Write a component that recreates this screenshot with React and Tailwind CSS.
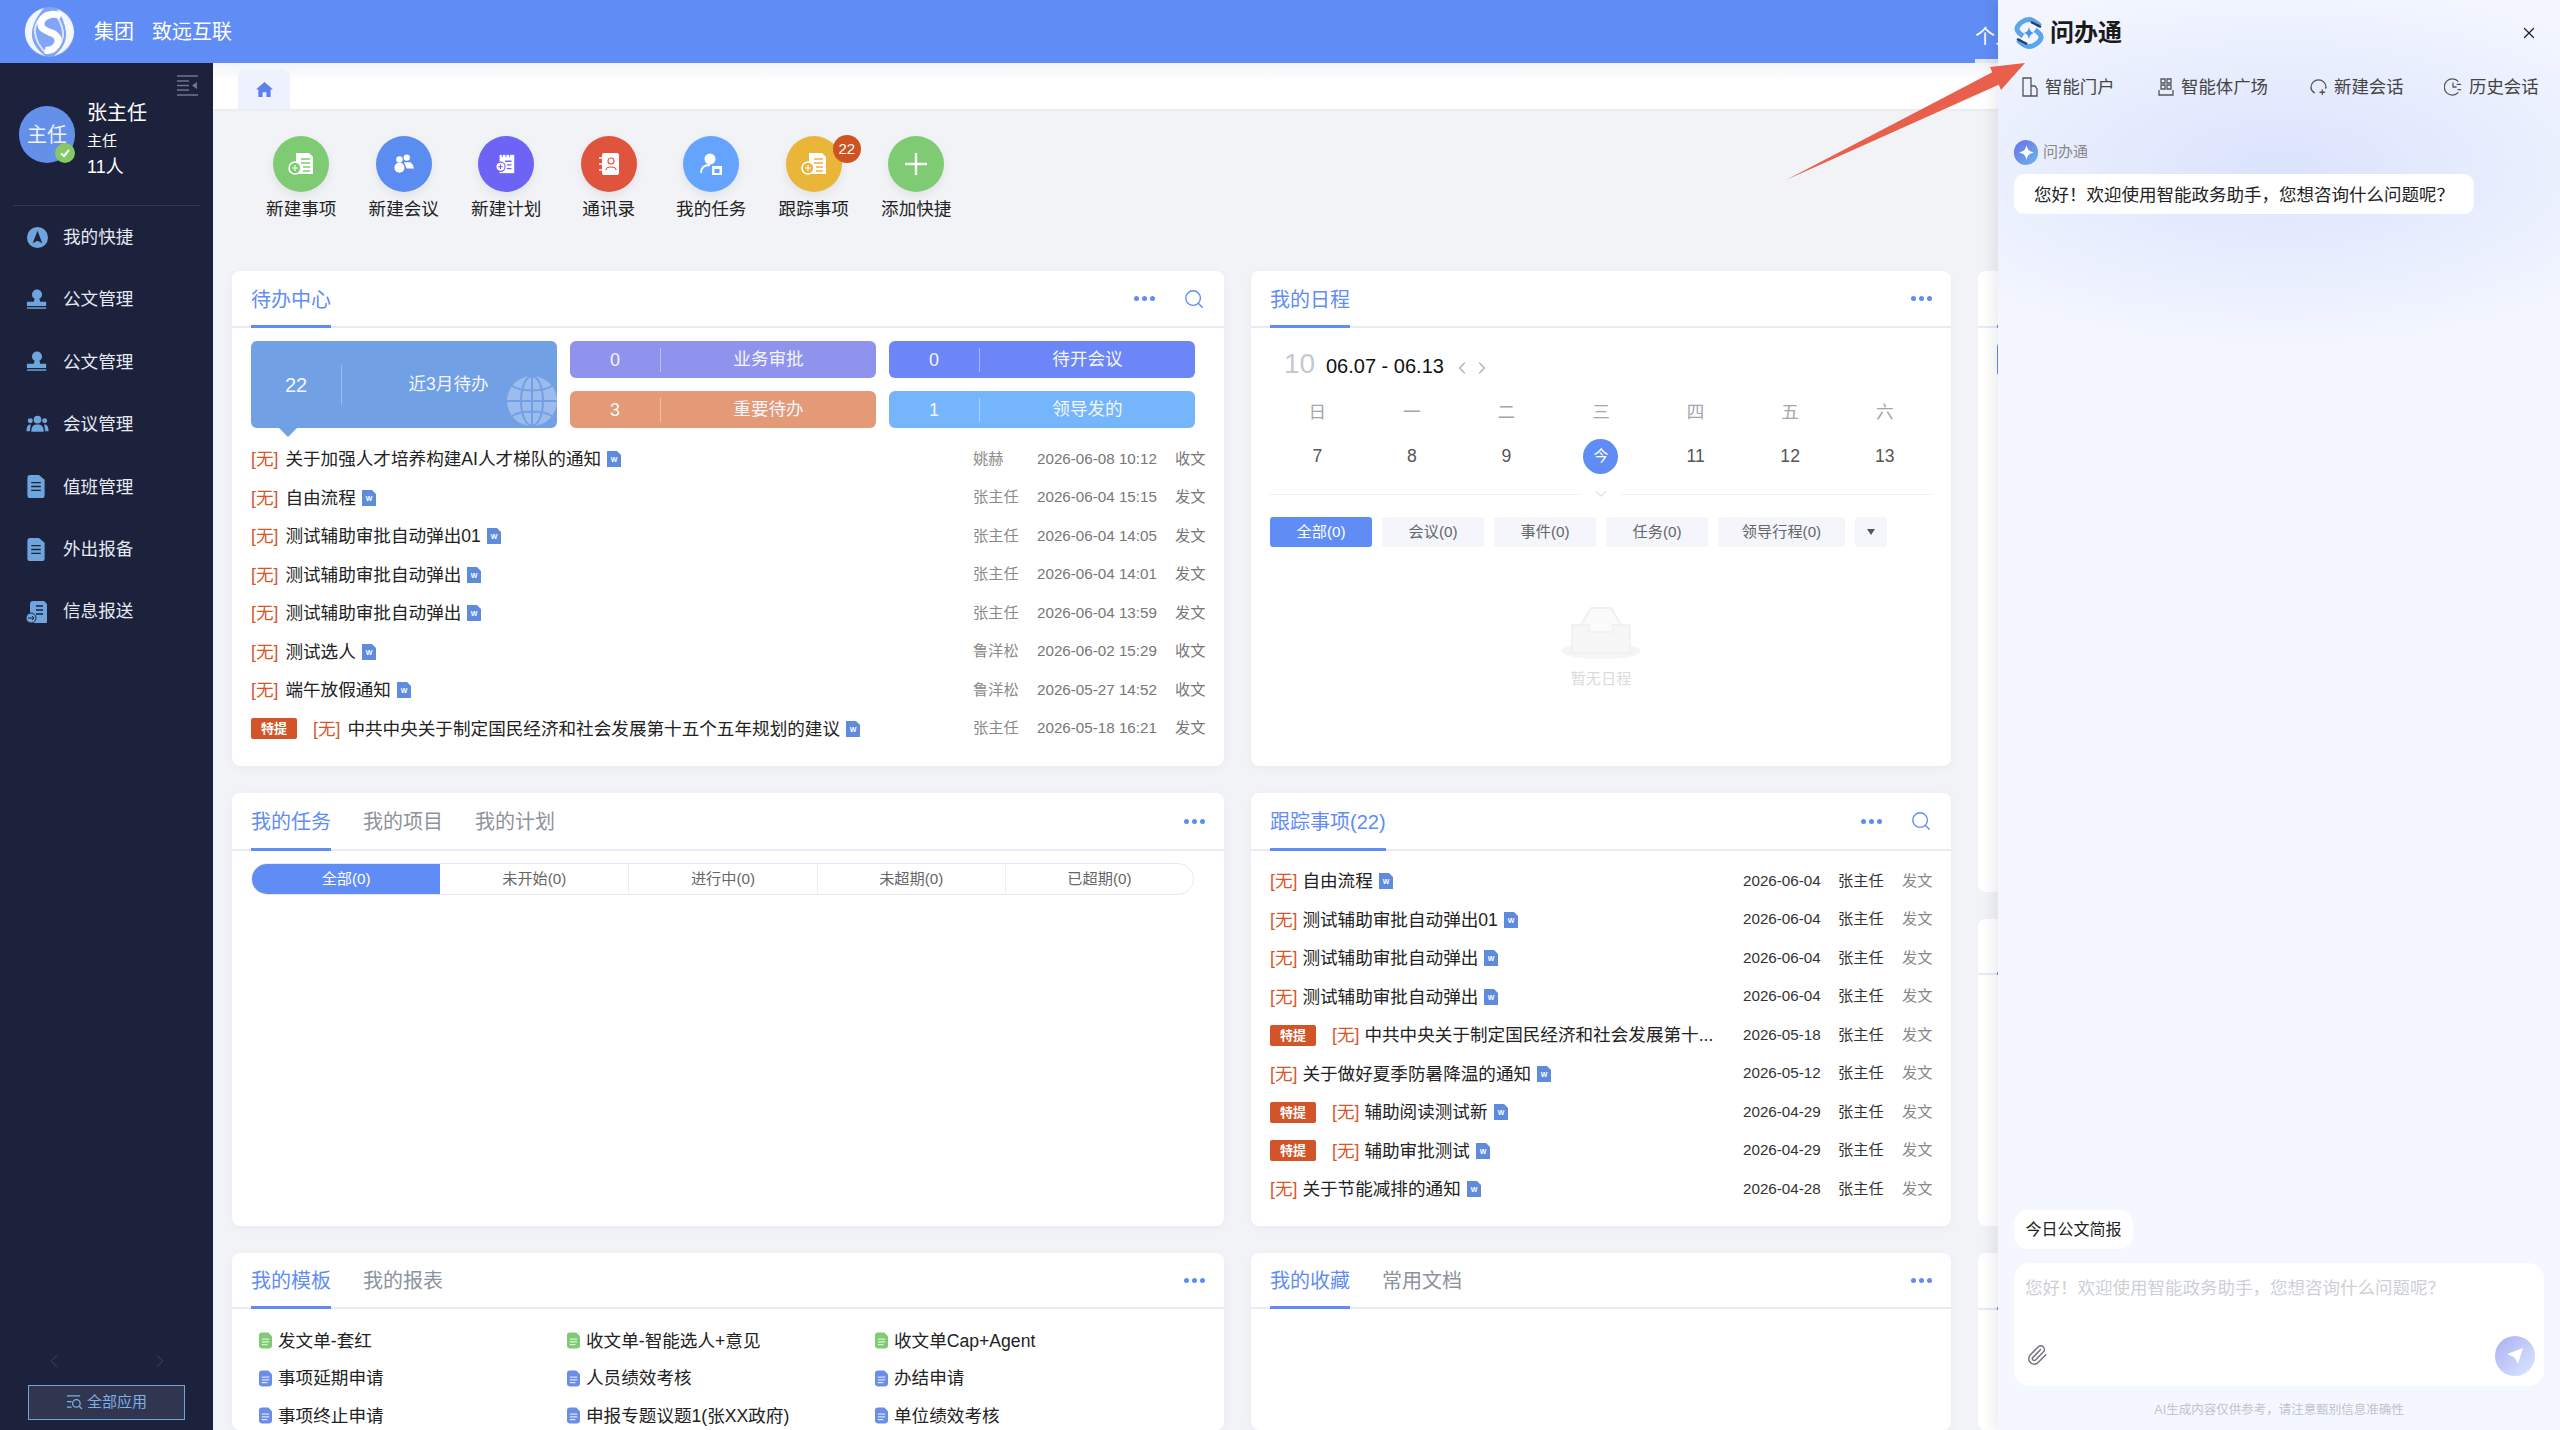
import React from 'react';
import { Search, ChevronLeft, ChevronRight, ChevronDown, X, Paperclip } from 'lucide-react';

const greeting = '您好\uFF01欢迎使用智能政务助手\uFF0C您想咨询什么问题呢\uFF1F';
const notice = 'AI生成内容仅供参考\uFF0C请注意甄别信息准确性';

const todoRows = [
  { title: '关于加强人才培养构建AI人才梯队的通知', author: '姚赫', date: '2026-06-08 10:12', kind: '收文' },
  { title: '自由流程', author: '张主任', date: '2026-06-04 15:15', kind: '发文' },
  { title: '测试辅助审批自动弹出01', author: '张主任', date: '2026-06-04 14:05', kind: '发文' },
  { title: '测试辅助审批自动弹出', author: '张主任', date: '2026-06-04 14:01', kind: '发文' },
  { title: '测试辅助审批自动弹出', author: '张主任', date: '2026-06-04 13:59', kind: '发文' },
  { title: '测试选人', author: '鲁洋松', date: '2026-06-02 15:29', kind: '收文' },
  { title: '端午放假通知', author: '鲁洋松', date: '2026-05-27 14:52', kind: '收文' },
  { title: '中共中央关于制定国民经济和社会发展第十五个五年规划的建议', author: '张主任', date: '2026-05-18 16:21', kind: '发文', urgent: true },
];

const trackRows = [
  { title: '自由流程', date: '2026-06-04' },
  { title: '测试辅助审批自动弹出01', date: '2026-06-04' },
  { title: '测试辅助审批自动弹出', date: '2026-06-04' },
  { title: '测试辅助审批自动弹出', date: '2026-06-04' },
  { title: '中共中央关于制定国民经济和社会发展第十...', date: '2026-05-18', urgent: true, cut: true },
  { title: '关于做好夏季防暑降温的通知', date: '2026-05-12' },
  { title: '辅助阅读测试新', date: '2026-04-29', urgent: true },
  { title: '辅助审批测试', date: '2026-04-29', urgent: true },
  { title: '关于节能减排的通知', date: '2026-04-28' },
];

const templates = [
  ['发文单-套红', '收文单-智能选人+意见', '收文单Cap+Agent'],
  ['事项延期申请', '人员绩效考核', '办结申请'],
  ['事项终止申请', '申报专题议题1(张XX政府)', '单位绩效考核'],
];

const NavIcon = ({ type }) => {
  if (type === 'nav') {
    return (
      <svg viewBox="0 0 24 24" className="w-[23px] h-[23px]">
        <circle cx="12" cy="12" r="11" fill="#6fa5dc" />
        <path d="M12 5 L17 18 L12 15.5 L7 18 Z" fill="#1c213c" />
      </svg>
    );
  }
  if (type === 'stamp') {
    return (
      <svg viewBox="0 0 24 24" className="w-[22px] h-[23px]" fill="#6fa5dc">
        <circle cx="12" cy="6.5" r="5.5" />
        <path d="M9.5 11 h5 l1 3.5 h6.5 v4.5 h-21 v-4.5 h7.5 Z" />
        <rect x="1" y="20.5" width="21" height="1.6" />
      </svg>
    );
  }
  if (type === 'people') {
    return (
      <svg viewBox="0 0 24 18" className="w-[23px] h-[18px]" fill="#6fa5dc">
        <circle cx="12" cy="4.5" r="4" />
        <circle cx="4.5" cy="5.5" r="2.6" />
        <circle cx="19.5" cy="5.5" r="2.6" />
        <path d="M5.5 17 C5.5 11 8 9.5 12 9.5 C16 9.5 18.5 11 18.5 17 Z" />
        <path d="M0.5 16.5 C0.5 11.5 2 9.5 5 9.5 L4 16.5 Z" />
        <path d="M23.5 16.5 C23.5 11.5 22 9.5 19 9.5 L20 16.5 Z" />
      </svg>
    );
  }
  if (type === 'doc') {
    return (
      <svg viewBox="0 0 20 24" className="w-[20px] h-[23px]">
        <path d="M4 0 H13 L19 5 V21 Q19 24 16 24 H4 Q1 24 1 21 V3 Q1 0 4 0 Z" fill="#6fa5dc" />
        <path d="M5 8 H15 M5 12 H15 M5 16 H15" stroke="#1c213c" strokeWidth="1.4" />
      </svg>
    );
  }
  return (
    <svg viewBox="0 0 22 22" className="w-[22px] h-[22px]">
      <path d="M7 0 H18 L21 3 V21 Q21 22 20 22 H4 V3 Q4 0 7 0 Z" fill="#6fa5dc" />
      <path d="M10 5 H17 M10 9 H17 M10 13 H17" stroke="#1c213c" strokeWidth="1.3" />
      <circle cx="5" cy="17" r="5" fill="#6fa5dc" stroke="#1c213c" strokeWidth="1" />
      <path d="M2 17 H8 M6 15 L8 17 L6 19" stroke="#1c213c" strokeWidth="1" fill="none" />
    </svg>
  );
};

const Sidebar = () => {
  const items = [
    ['我的快捷', 'nav'],
    ['公文管理', 'stamp'],
    ['公文管理', 'stamp'],
    ['会议管理', 'people'],
    ['值班管理', 'doc'],
    ['外出报备', 'doc'],
    ['信息报送', 'send'],
  ];
  return (
    <aside className="w-[213px] shrink-0 bg-[#1c213c] flex flex-col">
      <div className="flex justify-end pt-[12px] pr-[15px]">
        <svg viewBox="0 0 21 21" className="w-[21px] h-[21px]">
          <path d="M0 1 H21 M0 20 H21 M0 10.5 H12 M0 15 H12 M0 6 H12" stroke="#70758a" strokeWidth="1.6" />
          <path d="M20 7 V14 L15 10.5 Z" fill="#70758a" />
        </svg>
      </div>
      <div className="flex pl-[19px] mt-[4px]">
        <div className="relative w-[56px] h-[57px] mt-[6px] rounded-full bg-[#6490ea] flex items-center justify-center text-[20px] text-[#eef2fb]">
          主任
          <span className="absolute right-0 bottom-0 w-[20px] h-[20px] rounded-full bg-[#86c766] flex items-center justify-center">
            <svg viewBox="0 0 12 12" className="w-[12px] h-[12px]">
              <path d="M2 6.5 L5 9 L10 3" stroke="#fff" strokeWidth="2" fill="none" />
            </svg>
          </span>
        </div>
        <div className="ml-[12px] text-white">
          <div className="h-[26px] leading-[26px] text-[20px]">张主任</div>
          <div className="h-[30px] leading-[30px] text-[15px]">主任</div>
          <div className="h-[22px] leading-[22px] text-[18px]">11人</div>
        </div>
      </div>
      <div className="mx-[13px] mt-[27px] border-b border-[#333852]" />
      <nav className="flex flex-col">
        {items.map(([label, icon], i) => (
          <div key={i} className="h-[62.4px] flex items-center text-[17.6px] text-[#e6eaf2]">
            <span className="w-[63px] pl-[26px] flex items-center shrink-0">
              <NavIcon type={icon} />
            </span>
            {label}
          </div>
        ))}
      </nav>
      <div className="mt-auto flex justify-center gap-[84px] mb-[13px] text-[#434964]">
        <ChevronLeft className="w-[22px] h-[22px]" strokeWidth={1} />
        <ChevronRight className="w-[22px] h-[22px]" strokeWidth={1} />
      </div>
      <div className="mx-[28px] mb-[10px] h-[35px] border border-[#6fa5dc] bg-[#30364f] flex items-center justify-center gap-[4px] text-[15px] text-[#7fb0e6]">
        <svg viewBox="0 0 18 18" className="w-[17px] h-[17px]" fill="none" stroke="#7fb0e6" strokeWidth="1.3">
          <path d="M1 2 H15 M1 8 H6 M1 14 H6" />
          <circle cx="11" cy="10" r="4" />
          <path d="M14 13 L17 16" />
        </svg>
        全部应用
      </div>
    </aside>
  );
};

const QuickIcon = ({ type }) => {
  if (type === 'plus') {
    return (
      <svg viewBox="0 0 24 24" className="w-[24px] h-[24px]">
        <path d="M12 1 V23 M1 12 H23" stroke="#fff" strokeWidth="2.4" />
      </svg>
    );
  }
  if (type === 'meet') {
    return (
      <svg viewBox="0 0 24 24" className="w-[22px] h-[22px]" fill="#fff">
        <circle cx="7" cy="7" r="3.5" />
        <circle cx="15" cy="5" r="3.5" />
        <path d="M12 10 H19 Q22 12 23 17 H15 Z" />
        <circle cx="7" cy="16" r="5.5" />
      </svg>
    );
  }
  if (type === 'plan') {
    return (
      <svg viewBox="0 0 24 24" className="w-[22px] h-[22px]">
        <path d="M5 2 H21 V22 H5 Z" fill="#fff" />
        <path d="M8 1 V4 M12 1 V4 M16 1 V4" stroke="#6d64f5" strokeWidth="1.2" />
        <path d="M11 9 H18 M13 13 H18 M13 17 H18" stroke="#6d64f5" strokeWidth="1.4" />
        <circle cx="6" cy="15" r="5" fill="#fff" stroke="#6d64f5" strokeWidth="1.2" />
        <path d="M3.5 15 H8.5 M6 12.5 V17.5" stroke="#6d64f5" strokeWidth="1.1" />
      </svg>
    );
  }
  if (type === 'book') {
    return (
      <svg viewBox="0 0 24 24" className="w-[24px] h-[24px]">
        <rect x="5" y="1" width="17" height="22" rx="2" fill="#fff" />
        <path d="M2 6 H6 M2 12 H6 M2 18 H6" stroke="#fff" strokeWidth="1.6" />
        <circle cx="14" cy="9" r="3" fill="none" stroke="#e0533c" strokeWidth="1.2" />
        <path d="M9 18 C9 14 19 14 19 18" fill="none" stroke="#e0533c" strokeWidth="1.2" />
      </svg>
    );
  }
  if (type === 'task') {
    return (
      <svg viewBox="0 0 24 24" className="w-[24px] h-[24px]">
        <circle cx="11" cy="7" r="5.5" fill="#fff" />
        <path d="M2 21 C2 15 6 13 11 13" stroke="#fff" strokeWidth="1.8" fill="none" />
        <rect x="13" y="14" width="10" height="9" fill="#fff" />
        <rect x="15.5" y="17" width="5" height="4" fill="#64a4ff" />
      </svg>
    );
  }
  // new item and tracking share the sheet with a round badge
  const tint = type === 'track' ? '#e9b63a' : '#7ecb73';
  return (
    <svg viewBox="0 0 26 24" className="w-[26px] h-[24px]">
      <path d="M8 1 H21 L25 5 V22 H8 Z" fill="#fff" />
      <path d="M13 7 H22 M13 11 H22 M15 15 H22 M15 19 H22" stroke={tint} strokeWidth="1.4" />
      <circle cx="7" cy="16" r="6" fill={tint} stroke="#fff" strokeWidth="1.6" />
      <path d="M4 16 H10 M7 13 V19" stroke="#fff" strokeWidth="1.2" />
    </svg>
  );
};

const QuickItem = ({ label, color, icon, badge }) => (
  <div className="w-[102.5px] flex flex-col items-center">
    <div className={`relative w-[56px] h-[56px] rounded-full flex items-center justify-center shadow-[0_4px_10px_rgba(0,0,0,0.07)] ${color}`}>
      <QuickIcon type={icon} />
      {badge && (
        <span className="absolute -top-[1px] -right-[19px] w-[28px] h-[28px] rounded-full bg-[#cf5320] text-white text-[15px] flex items-center justify-center">
          {badge}
        </span>
      )}
    </div>
    <div className="mt-[5px] h-[24px] leading-[24px] text-[17.6px] text-[#222]">{label}</div>
  </div>
);

const WordIcon = () => (
  <svg viewBox="0 0 14 16" className="w-[14px] h-[16px] ml-[6px] shrink-0">
    <path d="M0 0 H10 L14 4 V16 H0 Z" fill="#5f8bdc" />
    <text x="7" y="11" fontSize="7" fontWeight="700" fill="#fff" textAnchor="middle">W</text>
  </svg>
);

const Dots = () => (
  <span className="flex gap-[3px]">
    <span className="w-[5px] h-[5px] rounded-full bg-[#5f8df5]" />
    <span className="w-[5px] h-[5px] rounded-full bg-[#5f8df5]" />
    <span className="w-[5px] h-[5px] rounded-full bg-[#5f8df5]" />
  </span>
);

const CardHeader = ({ tabs, search, height }) => (
  <div className={`${height} flex items-stretch px-[19px] gap-[32px] border-b-2 border-[#e8ebf4]`}>
    {tabs.map((t, i) => (
      <div
        key={t}
        className={`relative flex items-center pt-[2px] text-[20px] ${i === 0 ? 'text-[#5f8df5]' : 'text-[#8c939c]'}`}
      >
        {t}
        {i === 0 && <span className="absolute left-0 right-0 -bottom-[2px] h-[3px] bg-[#5f8df5]" />}
      </div>
    ))}
    <div className="ml-auto flex items-center gap-[28px]">
      <Dots />
      {search && <Search className="w-[22px] h-[22px] text-[#5f8df5]" strokeWidth={1.5} />}
    </div>
  </div>
);

const Card = ({ className = '', children }) => (
  <section className={`bg-white rounded-[8px] shadow-[0_2px_8px_rgba(0,0,0,0.04)] overflow-hidden ${className}`}>
    {children}
  </section>
);

const Level = () => <span className="text-[17.6px] text-[#d4572a] shrink-0">[无]</span>;

const UrgentTag = () => (
  <span className="w-[46px] h-[21px] mr-[16px] bg-[#d2552a] rounded-[2px] text-white text-[13px] font-bold flex items-center justify-center shrink-0">
    特提
  </span>
);

const StatBlock = ({ num, label, color }) => (
  <div className={`h-[37px] rounded-[6px] flex items-center text-[#f4f6ff] ${color}`}>
    <span className="w-[91px] text-center text-[18px] border-r border-white/40 leading-[24px]">{num}</span>
    <span className="flex-1 text-center text-[17.6px]">{label}</span>
  </div>
);

const GlobeMark = () => (
  <svg viewBox="0 0 50 50" className="absolute right-0 bottom-[2px] w-[50px] h-[50px]" fill="none" stroke="#72a0e4" strokeWidth="2">
    <circle cx="25" cy="25" r="25" fill="#9cbcee" stroke="none" />
    <ellipse cx="25" cy="25" rx="11" ry="25" />
    <path d="M25 0 V50 M0 25 H50 M5 10 C15 16 35 16 45 10 M5 40 C15 34 35 34 45 40" />
  </svg>
);

const TodoCard = () => (
  <Card className="h-[495px]">
    <CardHeader tabs={['待办中心']} search height="h-[57px]" />
    <div className="px-[19px] pt-[13px]">
      <div className="grid grid-cols-[306px_306px_306px] grid-rows-[37px_37px] gap-[13px]">
        <div className="relative row-span-2 rounded-[6px] bg-[#72a0e4] flex items-center text-[#f4f6ff]">
          <span className="w-[91px] text-center text-[20px] border-r border-white/30 leading-[40px]">22</span>
          <span className="flex-1 text-center text-[17.6px] pr-[2px]">近3月待办</span>
          <div className="absolute inset-0 overflow-hidden rounded-[6px]">
            <GlobeMark />
          </div>
          <span className="absolute left-[28px] top-full w-0 h-0 border-x-[9px] border-x-transparent border-t-[9px] border-t-[#72a0e4]" />
        </div>
        <StatBlock num="0" label="业务审批" color="bg-[#8f93ee]" />
        <StatBlock num="0" label="待开会议" color="bg-[#6c85f7]" />
        <StatBlock num="3" label="重要待办" color="bg-[#e49a76]" />
        <StatBlock num="1" label="领导发的" color="bg-[#75b5fb]" />
      </div>
      <div className="mt-[12px]">
        {todoRows.map((r, i) => (
          <div key={i} className="h-[38.5px] flex items-center">
            {r.urgent && <UrgentTag />}
            <Level />
            <span className="ml-[7px] text-[17.6px] text-[#222] whitespace-nowrap">{r.title}</span>
            <WordIcon />
            <span className="ml-auto w-[64px] text-[15.2px] text-[#8a8a8a] whitespace-nowrap">{r.author}</span>
            <span className="w-[138px] text-[15.2px] text-[#777] whitespace-nowrap">{r.date}</span>
            <span className="w-[30px] text-[15.2px] text-[#777] whitespace-nowrap">{r.kind}</span>
          </div>
        ))}
      </div>
    </div>
  </Card>
);

const ScheduleCard = () => (
  <Card className="h-[495px]">
    <CardHeader tabs={['我的日程']} height="h-[57px]" />
    <div className="px-[19px]">
      <div className="h-[71px] pl-[14px] flex items-center">
        <span className="w-[42px] text-[28px] text-[#c4c8d0]">10</span>
        <span className="text-[20px] text-[#111] mt-[4px]">06.07 - 06.13</span>
        <ChevronLeft className="ml-[8px] mt-[8px] w-[20px] h-[20px] text-[#a8acb3]" strokeWidth={1.3} />
        <ChevronRight className="mt-[8px] w-[20px] h-[20px] text-[#a8acb3]" strokeWidth={1.3} />
      </div>
      <div className="grid grid-cols-7 text-center text-[17.6px]">
        {['日', '一', '二', '三', '四', '五', '六'].map((d) => (
          <div key={d} className="h-[26px] leading-[26px] text-[#a2a6ad]">{d}</div>
        ))}
      </div>
      <div className="grid grid-cols-7 mt-[13px] text-center text-[17.6px] text-[#555]">
        {['7', '8', '9', '今', '11', '12', '13'].map((d) => (
          <div key={d} className="h-[36px] flex items-center justify-center">
            {d === '今' ? (
              <span className="w-[35px] h-[35px] rounded-full bg-[#5f8df5] text-white text-[15px] flex items-center justify-center">{d}</span>
            ) : d}
          </div>
        ))}
      </div>
      <div className="mt-[11px] flex items-center gap-[12px]">
        <div className="flex-1 border-t border-[#f0f1f3]" />
        <ChevronDown className="w-[18px] h-[18px] text-[#c4c8cf]" strokeWidth={1.2} />
        <div className="flex-1 border-t border-[#f0f1f3]" />
      </div>
      <div className="mt-[14px] flex gap-[10px] text-[15.2px] text-[#666]">
        <span className="w-[102px] h-[30px] rounded-[3px] bg-[#5f8df5] text-white flex items-center justify-center">全部(0)</span>
        {['会议(0)', '事件(0)', '任务(0)'].map((t) => (
          <span key={t} className="w-[102px] h-[30px] rounded-[3px] bg-[#f4f6fb] flex items-center justify-center">{t}</span>
        ))}
        <span className="w-[127px] h-[30px] rounded-[3px] bg-[#f4f6fb] flex items-center justify-center">领导行程(0)</span>
        <span className="w-[32px] h-[30px] rounded-[3px] bg-[#f4f6fb] flex items-center justify-center">
          <span className="w-0 h-0 border-x-[4px] border-x-transparent border-t-[6px] border-t-[#555]" />
        </span>
      </div>
      <div className="mt-[60px] flex flex-col items-center">
        <svg viewBox="0 0 80 52" className="w-[80px] h-[52px]">
          <ellipse cx="40" cy="44" rx="40" ry="8" fill="#f5f5f5" />
          <path d="M30 1 H50 L60 18 V45 H20 V18 Z" fill="#fbfbfb" stroke="#f0f0f0" strokeWidth="2" />
          <path d="M11 18 H28 V24 Q28 25 30 25 H50 Q52 25 52 24 V18 H69 V46 H11 Z" fill="#f7f7f8" stroke="#efefef" strokeWidth="1.5" />
        </svg>
        <span className="mt-[9px] text-[15.2px] text-[#d9dcdc]">暂无日程</span>
      </div>
    </div>
  </Card>
);

const TaskCard = () => (
  <Card className="h-[433px]">
    <CardHeader tabs={['我的任务', '我的项目', '我的计划']} height="h-[58px]" />
    <div className="pl-[19px] pt-[12px]">
      <div className="w-[943px] h-[32px] rounded-full border border-[#e8eaee] overflow-hidden grid grid-cols-5 text-[15.2px] text-[#666]">
        {['全部(0)', '未开始(0)', '进行中(0)', '未超期(0)', '已超期(0)'].map((t, i) => (
          <div
            key={t}
            className={`flex items-center justify-center ${i === 0 ? 'bg-[#5f8df5] text-white' : ''} ${i > 1 ? 'border-l border-[#eceef1]' : ''}`}
          >
            {t}
          </div>
        ))}
      </div>
    </div>
  </Card>
);

const TrackCard = () => (
  <Card className="h-[433px]">
    <CardHeader tabs={['跟踪事项(22)']} search height="h-[58px]" />
    <div className="px-[19px] pt-[11px]">
      {trackRows.map((r, i) => (
        <div key={i} className="h-[38.5px] flex items-center">
          {r.urgent && <UrgentTag />}
          <Level />
          <span className="ml-[5px] text-[17.6px] text-[#222] whitespace-nowrap">{r.title}</span>
          {!r.cut && <WordIcon />}
          <span className="ml-auto w-[95px] text-[15.2px] text-[#333] whitespace-nowrap">{r.date}</span>
          <span className="w-[64px] text-[15.2px] text-[#333] whitespace-nowrap">张主任</span>
          <span className="w-[30px] text-[15.2px] text-[#888] whitespace-nowrap">发文</span>
        </div>
      ))}
    </div>
  </Card>
);

const TemplateCard = () => (
  <Card>
    <CardHeader tabs={['我的模板', '我的报表']} height="h-[56px]" />
    <div className="pl-[27px] pt-[13px]">
      {templates.map((row, i) => (
        <div key={i} className="h-[37.5px] grid grid-cols-[308px_308px_308px] items-center">
          {row.map((t) => (
            <div key={t} className="flex items-center text-[17.6px] text-[#222] whitespace-nowrap">
              <svg viewBox="0 0 14 17" className="w-[13px] h-[17px] mr-[6px] shrink-0">
                <path d="M3 0 H10 L14 4 V14 Q14 17 11 17 H3 Q0 17 0 14 V3 Q0 0 3 0 Z" fill={i === 0 ? '#7ecb73' : '#6a8ee8'} />
                <path d="M3 7 H11 M3 10 H11 M3 13 H9" stroke="#fff" strokeWidth="1" />
              </svg>
              {t}
            </div>
          ))}
        </div>
      ))}
    </div>
  </Card>
);

const PanelNavIcon = ({ type }) => {
  if (type === 'portal') {
    return (
      <svg viewBox="0 0 16 20" className="w-[16px] h-[20px]" fill="none" stroke="#555" strokeWidth="1.3">
        <path d="M1 19 V1 H9 V19 Z M9 9 H13 L15 12 V19 H1" />
      </svg>
    );
  }
  if (type === 'square') {
    return (
      <svg viewBox="0 0 16 18" className="w-[16px] h-[18px]" fill="none" stroke="#555" strokeWidth="1.3">
        <path d="M3 1 H7 V5 H3 Z M9 1 H13 V5 H9 Z M3 7 H7 V11 H3 Z M9 7 H13 V11 H9 Z" />
        <path d="M1 12 V17 H15 V12" />
      </svg>
    );
  }
  if (type === 'chat') {
    return (
      <svg viewBox="0 0 18 18" className="w-[17px] h-[17px]" fill="none" stroke="#555" strokeWidth="1.4">
        <path d="M5 15 C2 13 1 11 1 9 C1 4.5 4.5 1 9 1 C13.5 1 17 4.5 17 9 L16 10" />
        <path d="M10 14 H16 M13 11 V17" />
      </svg>
    );
  }
  return (
    <svg viewBox="0 0 20 20" className="w-[18px] h-[18px]" fill="none" stroke="#555" strokeWidth="1.4">
      <path d="M16 4 A9 9 0 1 0 16 16" />
      <path d="M10 5 V10 H14 M14 7 H19 M15 13 H19" />
    </svg>
  );
};

const AssistantPanel = () => {
  const navs = [
    ['智能门户', 'portal'],
    ['智能体广场', 'square'],
    ['新建会话', 'chat'],
    ['历史会话', 'history'],
  ];
  return (
    <aside className="absolute top-0 right-0 w-[562px] h-full px-[16px] flex flex-col bg-[#f4f7ff] bg-[radial-gradient(ellipse_440px_190px_at_50%_165px,#dbe3fd_0%,#f4f7ff_100%)] shadow-[-6px_0_12px_rgba(0,0,0,0.07)]">
      <div className="mt-[15px] h-[36px] flex items-center">
        <svg viewBox="0 0 30 32" className="w-[30px] h-[32px]" fill="none">
          <path d="M26 9 C22 5 18 2.5 15 2.5 C10 2.5 4 7 3 11 C2.5 15 6 17 9 19" stroke="#5aa5ec" strokeWidth="5" />
          <path d="M4 23 C8 27 12 29.5 15 29.5 C20 29.5 26 25 27 21 C27.5 17 24 15 21 13" stroke="#5aa5ec" strokeWidth="5" />
          <path d="M17 5 L27 10 M3 22 L13 27" stroke="#2c3a66" strokeWidth="2.4" />
          <path d="M15 10 C16 14 17 15 20 16 C17 17 16 18 15 22 C14 18 13 17 10 16 C13 15 14 14 15 10 Z" fill="#4b8ff0" />
        </svg>
        <span className="ml-[6px] text-[24px] font-bold text-[#1a1a1a]">问办通</span>
        <X className="ml-auto mr-[6px] w-[18px] h-[18px] text-[#222]" strokeWidth={1.6} />
      </div>
      <div className="mt-[23px] h-[24px] pl-[8px] grid grid-cols-[136px_152px_134px_1fr] text-[17.4px] text-[#444]">
        {navs.map(([t, icon]) => (
          <div key={t} className="flex items-center gap-[7px] whitespace-nowrap">
            <PanelNavIcon type={icon} />
            {t}
          </div>
        ))}
      </div>
      <div className="mt-[42px] h-[25px] flex items-center">
        <span className="w-[24px] h-[25px] rounded-full bg-[linear-gradient(135deg,#6a6ef0,#6fb6e8)] flex items-center justify-center">
          <svg viewBox="0 0 16 16" className="w-[15px] h-[15px]">
            <path d="M8 0 C9 5 11 7 16 8 C11 9 9 11 8 16 C7 11 5 9 0 8 C5 7 7 5 8 0 Z" fill="#fff" />
          </svg>
        </span>
        <span className="ml-[5px] text-[15px] text-[#888]">问办通</span>
      </div>
      <div className="mt-[9px] w-[460px] h-[40px] pl-[20px] pt-[2px] rounded-[10px] bg-white flex items-center text-[17.5px] text-[#222]">
        {greeting}
      </div>
      <div className="mt-auto w-[119px] h-[39px] rounded-[14px] bg-white flex items-center justify-center text-[16px] text-[#222]">
        今日公文简报
      </div>
      <div className="mt-[14px] h-[123px] rounded-[16px] bg-white relative">
        <div className="pl-[11px] pt-[12px] text-[17.5px] leading-[26px] text-[#cdd0d4]">
          {greeting}
        </div>
        <Paperclip className="absolute left-[12px] bottom-[20px] w-[22px] h-[22px] text-[#70737c]" strokeWidth={1.6} />
        <span className="absolute right-[9px] bottom-[10px] w-[40px] h-[40px] rounded-full bg-[linear-gradient(135deg,#a9b0f3,#dce8ff)] flex items-center justify-center">
          <svg viewBox="0 0 20 20" className="w-[20px] h-[20px]">
            <path d="M18 2 L13 18 L9.5 11.5 L2 8 Z" fill="#fff" />
          </svg>
        </span>
      </div>
      <div className="h-[44px] pt-[4px] flex items-center justify-center text-[12.5px] text-[#c0c4cc]">
        {notice}
      </div>
    </aside>
  );
};

const SideCard = ({ className = '', height, block }) => (
  <div className={`bg-white rounded-[8px] overflow-hidden ${className}`}>
    <div className={`relative ${height} border-b-2 border-[#e8ebf4]`}>
      <span className="absolute left-[19px] -bottom-[2px] w-[80px] h-[3px] bg-[#5f8df5]" />
    </div>
    {block && <div className="ml-[19px] mt-[13px] w-[306px] h-[37px] rounded-[6px] bg-[#6c85f7]" />}
  </div>
);

export default function App() {
  return (
    <div className="relative w-[2560px] h-[1430px] overflow-hidden flex flex-col bg-[#f1f3f6] [font-family:'Liberation_Sans','Noto_Sans_CJK_SC',sans-serif]">
      <header className="h-[63px] shrink-0 bg-[#5f8df5] flex items-center text-white text-[20px]">
        <svg viewBox="0 0 51 50" className="ml-[24px] w-[51px] h-[50px]" fill="#fff">
          <circle cx="25.5" cy="25" r="25" fillOpacity="0.22" />
          <path d="M20 1 C8 4 1 14 1 25 C1 37 10 46 21 49 C12 42 7 34 8 25 C9 15 15 7 20 1 Z" fillOpacity="0.9" />
          <path d="M33 2 C44 6 50 15 50 26 C49 37 41 46 30 49 C38 43 43 34 42 25 C41 17 38 9 33 2 Z" fillOpacity="0.9" />
          <path d="M23 5 C15 10 10 18 11 26 C12 34 16 40 21 45" fill="none" stroke="#fff" strokeOpacity="0.7" strokeWidth="2" />
          <path d="M29 45 C35 40 40 33 39 25 C38 17 34 10 29 5" fill="none" stroke="#fff" strokeOpacity="0.7" strokeWidth="2" />
          <path d="M37 9 C28 5 18 9 17 16 C16 23 24 24 30 27 C35 30 35 35 32 39 C29 43 25 44 21 43" fill="none" stroke="#fff" strokeWidth="7" />
        </svg>
        <span className="ml-[19px]">集团</span>
        <span className="ml-[18px]">致远互联</span>
        <div className="relative ml-[1743px] h-full flex items-center pt-[10px] whitespace-nowrap">
          个人中心
          <span className="absolute left-0 right-0 bottom-0 h-[4px] bg-white/80" />
        </div>
      </header>

      <div className="flex-1 flex min-h-0">
        <Sidebar />
        <main className="flex-1 min-w-0 flex flex-col overflow-hidden">
          <div className="h-[46px] shrink-0 bg-white bg-[linear-gradient(#f3f4f7,#ffffff_40%)] pl-[25px] flex items-end shadow-[0_1px_3px_rgba(0,0,0,0.05)]">
            <div className="w-[52px] h-[40px] rounded-t-[8px] bg-[#eef2fe] flex items-center justify-center">
              <svg viewBox="0 0 18 18" className="w-[17px] h-[17px]" fill="#5b7fef">
                <path d="M9 1 L18 9 H15.5 V17 H11 V12 H7 V17 H2.5 V9 H0 Z" />
              </svg>
            </div>
          </div>

          <div className="h-[162px] shrink-0 pt-[27px] pl-[37px] flex items-start">
            <QuickItem label="新建事项" color="bg-[#7ecb73]" icon="new" />
            <QuickItem label="新建会议" color="bg-[#5b8cf0]" icon="meet" />
            <QuickItem label="新建计划" color="bg-[#6d64f5]" icon="plan" />
            <QuickItem label="通讯录" color="bg-[#e0533c]" icon="book" />
            <QuickItem label="我的任务" color="bg-[#64a4ff]" icon="task" />
            <QuickItem label="跟踪事项" color="bg-[#e9b63a]" icon="track" badge="22" />
            <QuickItem label="添加快捷" color="bg-[#7ecb73]" icon="plus" />
          </div>

          <div className="flex-1 min-h-0 pl-[19px] grid grid-cols-[992px_700px_600px] grid-rows-[495px_433px_1fr] gap-[27px]">
            <TodoCard />
            <ScheduleCard />
            <div className="row-span-3 flex flex-col gap-[27px]">
              <SideCard className="h-[621px]" height="h-[57px]" block />
              <SideCard className="h-[307px]" height="h-[56px]" />
              <SideCard className="flex-1" height="h-[57px]" />
            </div>
            <TaskCard />
            <TrackCard />
            <TemplateCard />
            <Card>
              <CardHeader tabs={['我的收藏', '常用文档']} height="h-[56px]" />
            </Card>
          </div>
        </main>
      </div>

      <AssistantPanel />

      <svg viewBox="0 0 2560 1430" className="absolute inset-0 w-full h-full pointer-events-none">
        <polygon points="2025,63 1990,67 1992.3,72.3 1786,180 1998.7,84.7 2001,90" fill="#e8604c" />
      </svg>
    </div>
  );
}
